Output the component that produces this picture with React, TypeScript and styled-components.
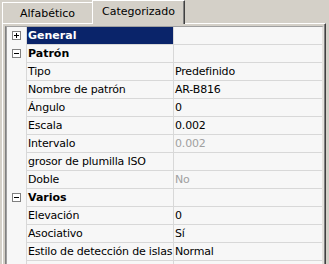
import React from "react";
import styled, { createGlobalStyle } from "styled-components";

const GlobalStyle = createGlobalStyle`
  html, body {
    margin: 0;
    padding: 0;
    background: #d4d0c8;
    overflow: hidden;
  }
  body {
    font-family: "DejaVu Sans", Tahoma, sans-serif;
    font-size: 11px;
    color: #000;
  }
`;

const Root = styled.div`
  width: 329px;
  height: 264px;
  overflow: hidden;
  display: flex;
  flex-direction: column;
`;

const TabStrip = styled.div`
  position: relative;
  z-index: 1;
  display: flex;
  align-items: flex-end;
  height: 23px;
  padding-left: 2px;
  flex: none;
`;

const Tab = styled.div<{ $active?: boolean }>`
  box-sizing: border-box;
  width: ${(p) => (p.$active ? 93 : 90)}px;
  height: ${(p) => (p.$active ? 24 : 21)}px;
  margin-bottom: ${(p) => (p.$active ? -1 : 0)}px;
  background: #d4d0c8;
  border-top: 1px solid #fff;
  border-left: 1px solid #fff;
  border-right: ${(p) => (p.$active ? "1px solid #404040" : "none")};
  box-shadow: ${(p) => (p.$active ? "inset -1px 0 0 #808080" : "none")};
  padding-top: 4px;
  line-height: 13px;
  text-align: center;
  white-space: nowrap;
`;

const Panel = styled.div`
  box-sizing: border-box;
  flex: 1;
  margin-left: 2px;
  width: 324px;
  border-top: 1px solid #fff;
  border-left: 1px solid #fff;
  border-right: 1px solid #404040;
  box-shadow: inset -1px 0 0 #808080;
  padding: 2px 1px 0 2px;
  display: flex;
  flex-direction: column;
`;

const Grid = styled.div`
  flex: 1;
  display: flex;
  flex-direction: column;
  background: #f7f7f7;
  border-top: 1px solid #a0a0a0;
  border-left: 1px solid #808080;
  box-shadow: inset 1px 0 0 #a0a0a0;
  border-right: 2px solid #e4e2de;
  padding-left: 1px;
`;

const Row = styled.div`
  display: flex;
  height: 18px;
  flex: none;
`;

const Indent = styled.div`
  box-sizing: border-box;
  width: 20px;
  border-right: 1px solid #d8d8d8;
  padding: 4px 0 0 5px;
  flex: none;
`;

const NameCell = styled.div<{ $selected?: boolean; $category?: boolean }>`
  box-sizing: border-box;
  width: 147px;
  flex: none;
  border-right: 1px solid #d8d8d8;
  border-bottom: 1px solid #d8d8d8;
  padding-left: 1px;
  line-height: 17px;
  letter-spacing: ${(p) => (p.$category ? "0" : "-0.18px")};
  white-space: nowrap;
  overflow: hidden;
  font-weight: ${(p) => (p.$category ? "bold" : "normal")};
  background: ${(p) => (p.$selected ? "#0a246a" : "transparent")};
  color: ${(p) => (p.$selected ? "#fff" : "#000")};
`;

const ValueCell = styled.div<{ $disabled?: boolean }>`
  box-sizing: border-box;
  flex: 1;
  border-bottom: 1px solid #d8d8d8;
  padding-left: 1px;
  line-height: 17px;
  letter-spacing: -0.18px;
  white-space: nowrap;
  overflow: hidden;
  color: ${(p) => (p.$disabled ? "#a0a0a0" : "#000")};
`;

const Filler = styled.div`
  flex: 1;
  display: flex;
`;

const FillerIndent = styled.div`
  width: 20px;
  box-sizing: border-box;
  border-right: 1px solid #d8d8d8;
`;

const FillerName = styled.div`
  width: 147px;
  box-sizing: border-box;
  border-right: 1px solid #d8d8d8;
`;

const ExpandBox = ({ open }: { open: boolean }) => (
  <svg width="9" height="9" viewBox="0 0 9 9" style={{ display: "block" }}>
    <rect x="0.5" y="0.5" width="8" height="8" fill="#fff" stroke="#808080" />
    <line x1="2" y1="4.5" x2="7" y2="4.5" stroke="#000" />
    {!open && <line x1="4.5" y1="2" x2="4.5" y2="7" stroke="#000" />}
  </svg>
);

type Item =
  | { kind: "cat"; name: string; open: boolean; selected?: boolean }
  | { kind: "prop"; name: string; value: string; disabled?: boolean };

const items: Item[] = [
  { kind: "cat", name: "General", open: false, selected: true },
  { kind: "cat", name: "Patrón", open: true },
  { kind: "prop", name: "Tipo", value: "Predefinido" },
  { kind: "prop", name: "Nombre de patrón", value: "AR-B816" },
  { kind: "prop", name: "Ángulo", value: "0" },
  { kind: "prop", name: "Escala", value: "0.002" },
  { kind: "prop", name: "Intervalo", value: "0.002", disabled: true },
  { kind: "prop", name: "grosor de plumilla ISO", value: "" },
  { kind: "prop", name: "Doble", value: "No", disabled: true },
  { kind: "cat", name: "Varios", open: true },
  { kind: "prop", name: "Elevación", value: "0" },
  { kind: "prop", name: "Asociativo", value: "Sí" },
  { kind: "prop", name: "Estilo de detección de islas", value: "Normal" },
];

export default function App() {
  return (
    <Root>
      <GlobalStyle />
      <TabStrip>
        <Tab>Alfabético</Tab>
        <Tab $active>Categorizado</Tab>
      </TabStrip>
      <Panel>
        <Grid>
          {items.map((it, i) =>
            it.kind === "cat" ? (
              <Row key={i}>
                <Indent>
                  <ExpandBox open={it.open} />
                </Indent>
                <NameCell $category $selected={it.selected}>
                  {it.name}
                </NameCell>
                <ValueCell />
              </Row>
            ) : (
              <Row key={i}>
                <Indent />
                <NameCell>{it.name}</NameCell>
                <ValueCell $disabled={it.disabled}>{it.value}</ValueCell>
              </Row>
            )
          )}
          <Filler>
            <FillerIndent />
            <FillerName />
          </Filler>
        </Grid>
      </Panel>
    </Root>
  );
}
